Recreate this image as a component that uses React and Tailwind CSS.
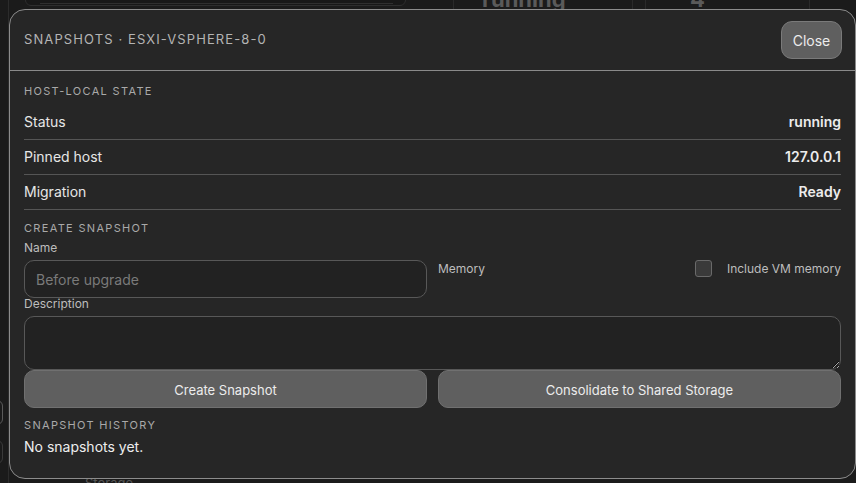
import React, { useState } from 'react';

const font = { fontFamily: 'Inter, "Noto Sans", sans-serif' };

// Label/value rows for the host-local state block
const stateRows = [
  { label: 'Status', value: 'running' },
  { label: 'Pinned host', value: '127.0.0.1' },
  { label: 'Migration', value: 'Ready' },
];

const SectionTitle = ({ children, className = '' }) => (
  <div className={`text-[11px] leading-[14px] uppercase tracking-[0.12em] text-[#a9a9a9] ${className}`}>{children}</div>
);

const FieldLabel = ({ children, className = '' }) => (
  <label className={`text-[12px] leading-[12px] text-[#bdbdbd] ${className}`}>{children}</label>
);

const Backdrop = () => (
  <div className="absolute inset-0 overflow-hidden bg-[#1b1b1b]">
    {/* faint page content behind the dialog */}
    <div className="absolute left-[8px] top-0 h-full w-px bg-[#2c2c2c]" />
    <div className="absolute left-[25px] top-[-20px] h-[26px] w-[381px] rounded-b-md border border-[#2e2e2e] bg-[#181818]">
      <div className="absolute bottom-[1px] left-[14px] right-[12px] h-px bg-[#2f2f2f]" />
    </div>
    <div className="absolute left-[453px] top-[-20px] h-[30px] w-[180px] border-x border-[#2a2a2a]" />
    <div className="absolute left-[482px] top-[-12px] text-[22px] font-bold leading-none text-[#5a5a5a]">running</div>
    <div className="absolute left-[645px] top-[-20px] h-[30px] w-[165px] border-x border-[#2a2a2a]" />
    <div className="absolute left-[690px] top-[-12px] text-[22px] font-bold leading-none text-[#5a5a5a]">4</div>
    <div className="absolute left-[-10px] top-[400px] h-[25px] w-[13px] rounded-md border border-[#5a5a5a]" />
    <div className="absolute left-[-10px] top-[440px] h-[24px] w-[13px] rounded-md border border-[#3a3a3a]" />
    <div className="absolute left-[85px] top-[475px] text-[13px] leading-[16px] text-[#555]">Storage</div>
  </div>
);

export default function App() {
  const [name, setName] = useState('');
  const [description, setDescription] = useState('');
  const [withMemory, setWithMemory] = useState(false);

  return (
    <div className="relative h-[483px] w-[856px] overflow-hidden" style={font}>
      <Backdrop />

      <div className="absolute left-[9px] top-[9px] flex h-[470px] w-[847px] flex-col rounded-[16px] border border-[#8c8c8c] bg-[#262626] text-[#e6e6e6]">
        {/* header */}
        <div className="flex h-[61px] items-center justify-between border-b border-[#8a8a8a] pl-[14px] pr-[13px]">
          <div className="text-[13px] uppercase tracking-[0.085em] text-[#b4b4b4]">Snapshots · esxi-vsphere-8-0</div>
          <button className="h-[38px] w-[61px] rounded-[11px] border border-[#7a7a7a] bg-[#5f5f5f] pt-[1px] text-[14px] leading-[20px] text-[#ececec]">
            Close
          </button>
        </div>

        <div className="flex flex-col px-[14px] pt-[13px]">
          <SectionTitle>Host-local state</SectionTitle>
          <div className="mt-[7px] flex flex-col">
            {stateRows.map((row) => (
              <div key={row.label} className="flex h-[35px] items-center justify-between border-b border-[#555] pb-[1px]">
                <span className="text-[14px] leading-[20px] text-[#e6e6e6]">{row.label}</span>
                <span className="text-[14px] leading-[20px] font-semibold text-[#ececec]">{row.value}</span>
              </div>
            ))}
          </div>

          <SectionTitle className="mt-[11px]">Create snapshot</SectionTitle>
          <div className="mt-[7px] grid grid-cols-2 gap-x-[11px]">
            <div className="flex flex-col">
              <FieldLabel>Name</FieldLabel>
              <input
                value={name}
                onChange={(e) => setName(e.target.value)}
                placeholder="Before upgrade"
                className="mt-[6px] h-[38px] rounded-[10px] border border-[#585858] bg-[#222] px-[11px] text-[14px] text-[#e6e6e6] outline-none placeholder:text-[#7a7a7a]"
              />
            </div>
            <div className="flex items-center justify-between self-start pt-[18px]">
              <span className="text-[12px] leading-[17px] text-[#bdbdbd]">Memory</span>
              <label className="flex items-center gap-[15px]">
                <input
                  type="checkbox"
                  checked={withMemory}
                  onChange={(e) => setWithMemory(e.target.checked)}
                  className="h-[17px] w-[17px] appearance-none rounded-[3px] border border-[#6a6a6a] bg-[#3a3a3a]"
                />
                <span className="text-[12px] leading-[17px] text-[#bdbdbd]">Include VM memory</span>
              </label>
            </div>
          </div>

          <FieldLabel>Description</FieldLabel>
          <textarea
            value={description}
            onChange={(e) => setDescription(e.target.value)}
            className="mt-[6px] h-[54px] resize-y rounded-[10px] border border-[#585858] bg-[#222] px-[11px] py-[8px] text-[14px] text-[#e6e6e6] outline-none"
          />

          <div className="grid grid-cols-2 gap-x-[11px]">
            <button className="h-[38px] rounded-[10px] border border-[#707070] bg-[#5f5f5f] pt-[2px] text-[13px] leading-[18px] text-[#ececec]">
              Create Snapshot
            </button>
            <button className="h-[38px] rounded-[10px] border border-[#707070] bg-[#5f5f5f] pt-[2px] text-[13px] leading-[18px] text-[#ececec]">
              Consolidate to Shared Storage
            </button>
          </div>

          <SectionTitle className="mt-[10px]">Snapshot history</SectionTitle>
          <div className="mt-[5px] text-[14px] leading-[20px] text-[#eeeeee]">No snapshots yet.</div>
        </div>
      </div>
    </div>
  );
}
